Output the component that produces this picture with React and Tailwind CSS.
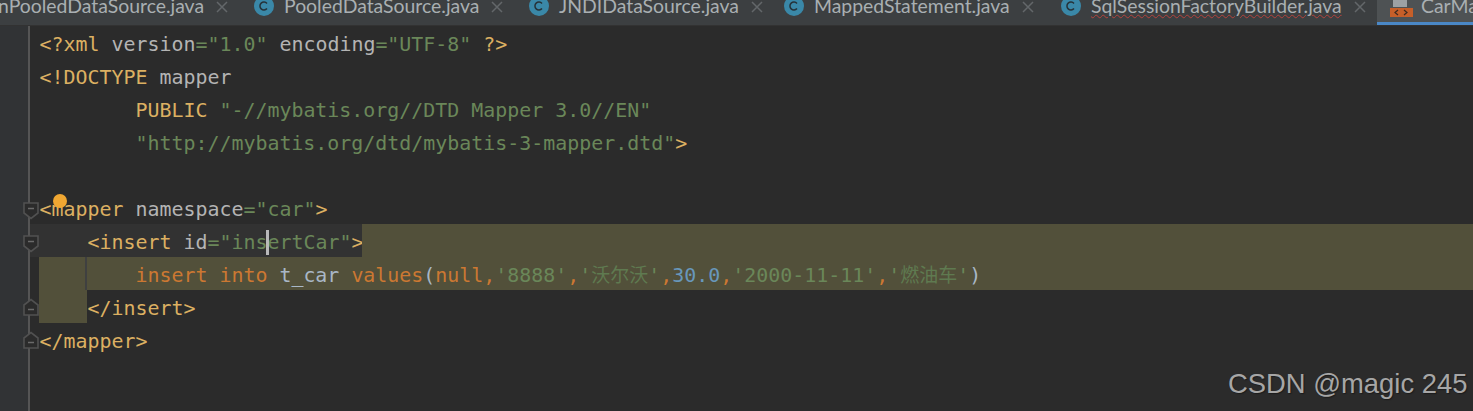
import React from 'react';

const tabs = [
    { name: 'nPooledDataSource.java', width: 'w-[256px]', noIcon: true },
    { name: 'PooledDataSource.java', width: 'w-[275px]' },
    { name: 'JNDIDataSource.java', width: 'w-[255px]' },
    { name: 'MappedStatement.java', width: 'w-[277px]' },
    { name: 'SqlSessionFactoryBuilder.java', width: 'w-[316px]', squiggle: true },
];

const Tag = ({ children }) => <span className="text-[#dcb062]">{children}</span>;
const Attr = ({ children }) => <span className="text-[#b4b4b4]">{children}</span>;
const Str = ({ children }) => <span className="text-[#6a8759]">{children}</span>;
const Cjk = ({ children }) => <span className="text-[19px] text-[#5f7a50]">{children}</span>;
const Kw = ({ children }) => <span className="text-[#cc7832]">{children}</span>;
const Plain = ({ children }) => <span className="text-[#a9b7c6]">{children}</span>;

const ClassIcon = () => (
    <svg width="20" height="20" viewBox="0 0 20 20" className="-mt-[4px] shrink-0">
        <circle cx="10" cy="10" r="10" fill="#3a88a8" />
        <path d="M13 7.4a4 4 0 1 0 0 5.2" fill="none" stroke="#263238" strokeWidth="1.5" />
    </svg>
);

const CloseIcon = () => (
    <svg width="12" height="12" viewBox="0 0 12 12" className="mt-[1px] shrink-0">
        <path d="M1 1l10 10M11 1L1 11" stroke="#63676a" strokeWidth="1.5" />
    </svg>
);

const XmlIcon = () => (
    <svg width="24" height="24" viewBox="0 0 24 24" className="shrink-0">
        <path d="M3 -6h11l3 3v10H3z" fill="#9da1a4" />
        <rect x="0" y="8" width="23" height="9" fill="#c65f29" />
        <path d="M8 10l-3 2.5 3 2.5M14 10l3 2.5-3 2.5" fill="none" stroke="#3c2a20" strokeWidth="1.2" />
    </svg>
);

const FoldIcon = ({ up }) => (
    <svg width="16" height="18" viewBox="0 0 16 18" className={up ? 'rotate-180' : ''}>
        <path d="M1 1h14v10l-7 5.5L1 11z" fill="#2b2b2b" stroke="#515151" strokeWidth="1.6" />
        <path d="M5 6.5h6" stroke="#6a6a6a" strokeWidth="1.5" />
    </svg>
);

const Row = ({ children }) => (
    <div className="h-[33px] pl-[9.5px] pt-[2px] leading-[33px] whitespace-pre">{children}</div>
);

const folds = { 5: 'down', 6: 'down', 8: 'up', 9: 'up' };

const App = () => {
    return (
        <div className="relative h-[411px] w-[1473px] overflow-hidden bg-[#2b2b2b]">
            <div className="flex h-[26px] items-start overflow-hidden border-b border-[#323232] bg-[#3c3f41] text-[19.4px] leading-[24px] text-[#a9afb2] [font-family:'Lato',sans-serif]">
                {tabs.map(tab => (
                    <div key={tab.name} className={`flex h-[25px] shrink-0 items-start ${tab.width} ${tab.noIcon ? '-ml-[2px]' : ''}`}>
                        {!tab.noIcon && <ClassIcon />}
                        <span className={`${tab.noIcon ? '' : 'ml-[10px]'} -mt-[6px] whitespace-nowrap ${tab.squiggle ? 'underline decoration-wavy decoration-[#b4423c] decoration-1' : ''}`}>{tab.name}</span>
                        <span className="ml-[12px]"><CloseIcon /></span>
                    </div>
                ))}
                <div className="flex h-[25px] flex-1 items-start gap-[7px] border-b-[3px] border-[#4a88c7] bg-[#4e5254] pl-[13px]">
                    <XmlIcon />
                    <span className="-mt-[6px] whitespace-nowrap">CarMapper.xml</span>
                </div>
            </div>

            <div className="flex h-[385px] text-[19.93px] [font-family:'DejaVu_Sans_Mono','Noto_Sans_CJK_SC',monospace]">
                <div className="relative z-10 w-[30px] shrink-0 border-r-2 border-[#555555] bg-[#313335]">
                    {Array.from({ length: 10 }, (_, i) => (
                        <div key={i} className="relative h-[33px]">
                            {folds[i] && (
                                <div className={`absolute left-[23px] ${folds[i] === 'up' ? 'top-[8px]' : 'top-[11px]'}`}>
                                    <FoldIcon up={folds[i] === 'up'} />
                                </div>
                            )}
                        </div>
                    ))}
                </div>
                <div className="relative min-w-0 flex-1">
                    <Row><Tag>{'<?'}</Tag><Tag>xml</Tag> <Attr>version</Attr><Str>="1.0"</Str> <Attr>encoding</Attr><Str>="UTF-8"</Str> <Tag>{'?>'}</Tag></Row>
                    <Row><Tag>{'<!DOCTYPE'}</Tag> <Attr>mapper</Attr></Row>
                    <Row><Tag>{'        PUBLIC'}</Tag> <Str>"-//mybatis.org//DTD Mapper 3.0//EN"</Str></Row>
                    <Row><Str>{'        "http://mybatis.org/dtd/mybatis-3-mapper.dtd"'}</Str><Tag>{'>'}</Tag></Row>
                    <Row />
                    <Row><Tag>{'<mapper'}</Tag> <Attr>namespace</Attr><Str>="car"</Str><Tag>{'>'}</Tag></Row>
                    <div className="flex h-[33px]">
                        <div className="w-[332px] bg-[#323232] pl-[9.5px] pt-[2px] leading-[33px] whitespace-pre">
                            <Tag>{'    <insert'}</Tag> <Attr>id</Attr><Str>="ins</Str><span className="relative"><span className="absolute -left-[1px] -top-[1px] h-[25px] w-[3px] bg-[#b9b9b9]" /></span><Str>ertCar"</Str><Tag>{'>'}</Tag>
                        </div>
                        <div className="flex-1 bg-[#52503a]" />
                    </div>
                    <div className="relative ml-[9px] h-[33px] bg-[#52503a] pl-[0.5px] pt-[2px] leading-[33px] whitespace-pre">
                        <span className="absolute left-[46px] top-0 h-full w-[2px] bg-[#3f4040]" />
                        <Kw>{'        insert into'}</Kw> <Plain>t_car</Plain> <Kw>values</Kw><Plain>(</Plain><Kw>null,</Kw><Str>'8888'</Str><Kw>,</Kw><Str>'</Str><Cjk>沃尔沃</Cjk><Str>'</Str><Kw>,</Kw><span className="text-[#6897bb]">30.0</span><Kw>,</Kw><Str>'2000-11-11'</Str><Kw>,</Kw><Str>'</Str><Cjk>燃油车</Cjk><Str>'</Str><Plain>)</Plain>
                    </div>
                    <div className="flex h-[33px] whitespace-pre">
                        <div className="ml-[9px] h-full w-[48px] bg-[#52503a]" />
                        <span className="pl-[0.5px] pt-[2px] leading-[33px]"><Tag>{'</insert>'}</Tag></span>
                    </div>
                    <Row><Tag>{'</mapper>'}</Tag></Row>
                    <div className="absolute left-[23px] top-[168px] h-[14px] w-[14px] rounded-full bg-[#f0a732]" />
                </div>
            </div>

            <div className="absolute left-[1228px] top-[368px] text-[27.4px] leading-[32px] text-[#a6a6a6] [font-family:'Liberation_Sans',sans-serif] [text-shadow:1px_1px_1px_#1c1c1c] whitespace-nowrap">CSDN @magic 245</div>
        </div>
    );
};

export default App;
